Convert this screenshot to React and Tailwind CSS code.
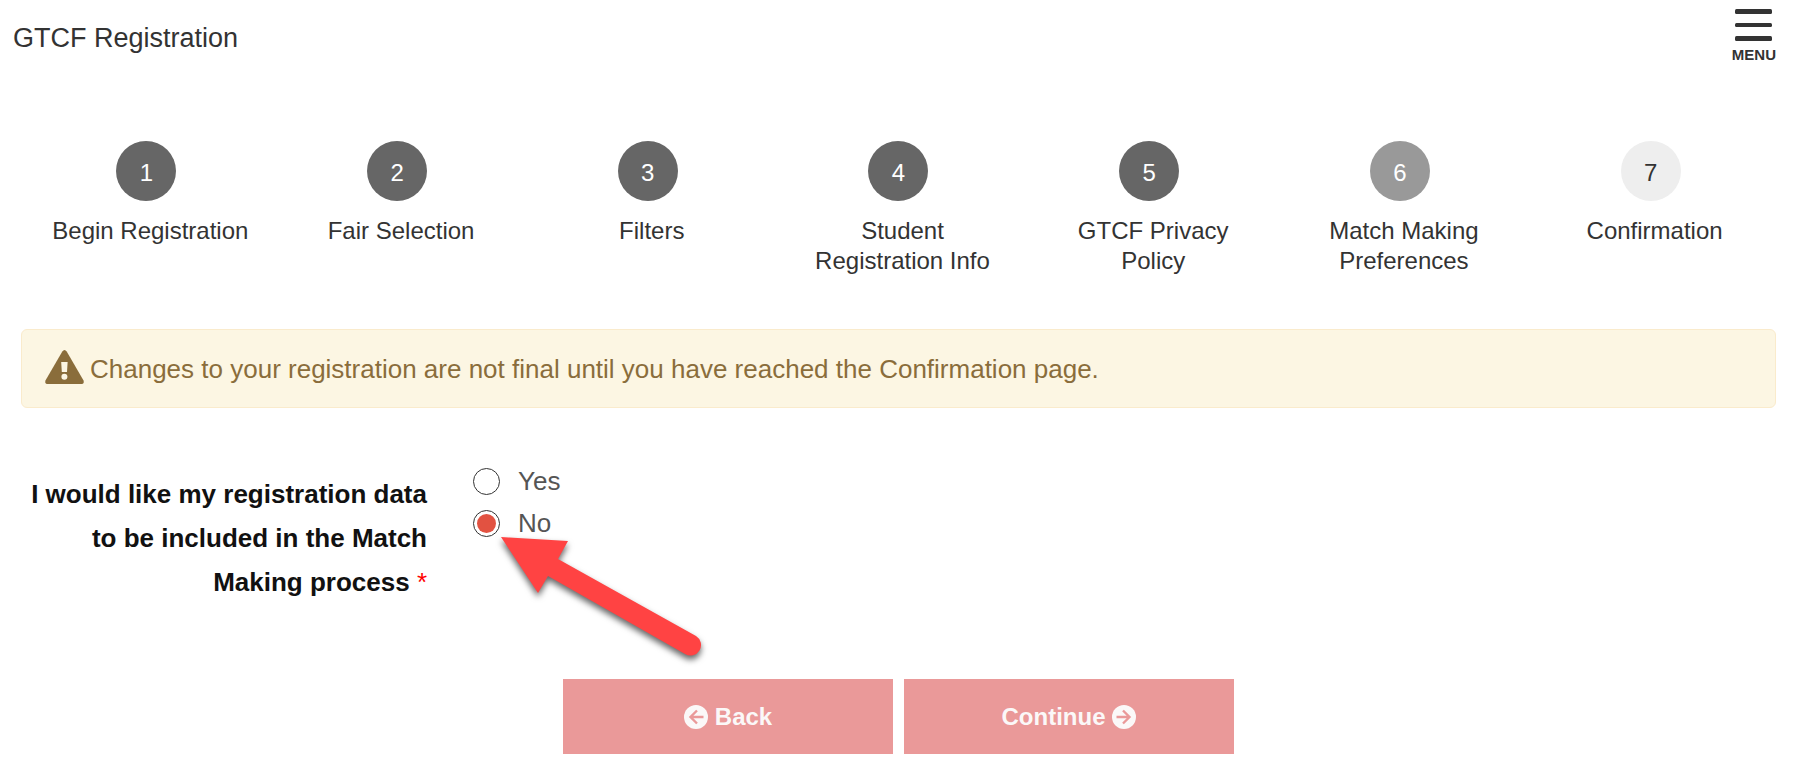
import { useState } from 'react'

const steps = [
  { label: 'Begin Registration', state: 'done' },
  { label: 'Fair Selection', state: 'done' },
  { label: 'Filters', state: 'done' },
  { label: 'Student Registration Info', state: 'done' },
  { label: 'GTCF Privacy Policy', state: 'done' },
  { label: 'Match Making Preferences', state: 'current' },
  { label: 'Confirmation', state: 'upcoming' },
]

const circleStyles = {
  done: 'bg-[#666666] text-white',
  current: 'bg-[#999999] text-white',
  upcoming: 'bg-[#eeeeee] text-[#333333]',
}

const WarningIcon = () => (
  <svg className="mb-[3px] h-[34px] w-[39px] shrink-0" viewBox="0 0 39 34" aria-hidden="true">
    <path d="M17.3 1.6 Q19.5 -1.4 21.7 1.6 L38.4 30.2 Q39.8 34 36 34 H3 Q-0.8 34 0.6 30.2 Z" fill="currentColor" />
    <path d="M16.2 12 H22.6 L22 22 H16.8 Z" fill="#fcf6e3" />
    <circle cx="19.4" cy="26.8" r="3" fill="#fcf6e3" />
  </svg>
)

const CircleArrow = ({ className = '' }) => (
  <svg className={`size-6 ${className}`} viewBox="0 0 24 24" aria-hidden="true">
    <circle cx="12" cy="12" r="12" fill="currentColor" />
    <path d="M19.5 12 H7 M13 5.5 L6.5 12 L13 18.5" fill="none" stroke="#ea9999" strokeWidth="2.4" />
  </svg>
)

const Header = () => (
  <header className="flex items-start justify-between pl-[13px] pr-8 pt-[9px]">
    <h1 className="pt-[11px] text-[27px] leading-9">GTCF Registration</h1>
    <button type="button" className="flex flex-col items-center">
      <svg className="h-8 w-[37px]" viewBox="0 0 37 32" fill="currentColor" aria-hidden="true">
        <rect y="0" width="37" height="5" rx="1.5" />
        <rect y="14" width="37" height="4" rx="1.5" />
        <rect y="27" width="37" height="5" rx="1.5" />
      </svg>
      <span className="mt-1 text-[15px] font-bold leading-5">MENU</span>
    </button>
  </header>
)

const Stepper = () => (
  <ol className="ml-[25px] mr-7 mt-19 grid grid-cols-7">
    {steps.map((step, i) => (
      <li key={step.label} className="flex flex-col items-center px-5 text-2xl leading-[30px]">
        <span className={`mr-2 flex size-[60px] items-center justify-center rounded-full pt-1 ${circleStyles[step.state]}`}>
          {i + 1}
        </span>
        <span className="mt-[15px] text-center">{step.label}</span>
      </li>
    ))}
  </ol>
)

const Alert = () => (
  <div role="alert" className="mt-[53px] flex items-center gap-[6px] rounded-md border border-[#faebcc] bg-[#fcf6e3] px-[23px] py-5 text-[26px] leading-9 text-[#8a6d3b]">
    <WarningIcon />
    <p>Changes to your registration are not final until you have reached the Confirmation page.</p>
  </div>
)

// Callout that points at the selected answer
const Arrow = () => (
  <svg className="pointer-events-none absolute left-7 top-[77px] h-36 w-52 overflow-visible" viewBox="0 0 208 144" aria-hidden="true">
    <path
      d="M0 0 L67 4 L57 22 L195 99 A10 10 0 0 1 184 117 L47 39 L37 56 Z"
      fill="#ff4343"
      className="drop-shadow-[0_4px_3px_rgba(0,0,0,0.6)]"
    />
  </svg>
)

const MatchMaking = () => {
  const [answer, setAnswer] = useState('No')

  return (
    <fieldset className="mt-[52px] flex gap-[46px]" aria-labelledby="match-making">
      <div id="match-making" className="w-[406px] pt-3 text-right text-[26px] font-bold leading-[44px] text-[#111111]">
        I would like my registration data to be included in the Match Making process{' '}
        <span className="font-normal text-[#ff0000]">*</span>
      </div>
      <div className="relative flex flex-col text-[26px] leading-[42px] text-[#555555]">
        {['Yes', 'No'].map((option) => (
          <label key={option} className="flex items-center gap-[18px]">
            <input
              type="radio"
              name="match-making"
              value={option}
              checked={answer === option}
              onChange={() => setAnswer(option)}
              className="size-[27px] appearance-none rounded-full border border-[#333333] bg-white bg-clip-content p-[3px] checked:bg-[#e25241]"
            />
            {option}
          </label>
        ))}
        <Arrow />
      </div>
    </fieldset>
  )
}

const Actions = () => (
  <div className="mt-[75px] flex justify-center gap-[11px] text-2xl font-bold text-[#fbf8f8]">
    <button type="button" className="flex h-[75px] w-[330px] items-center justify-center gap-[7px] bg-[#ea9999]">
      <CircleArrow />
      Back
    </button>
    <button type="button" className="flex h-[75px] w-[330px] items-center justify-center gap-[7px] bg-[#ea9999]">
      Continue
      <CircleArrow className="rotate-180" />
    </button>
  </div>
)

export default function App() {
  return (
    <div className="min-h-screen bg-white font-['Liberation_Sans',Arial,sans-serif] text-[#333333]">
      <Header />
      <Stepper />
      <main className="ml-[21px] mr-8">
        <Alert />
        <MatchMaking />
        <Actions />
      </main>
    </div>
  )
}
